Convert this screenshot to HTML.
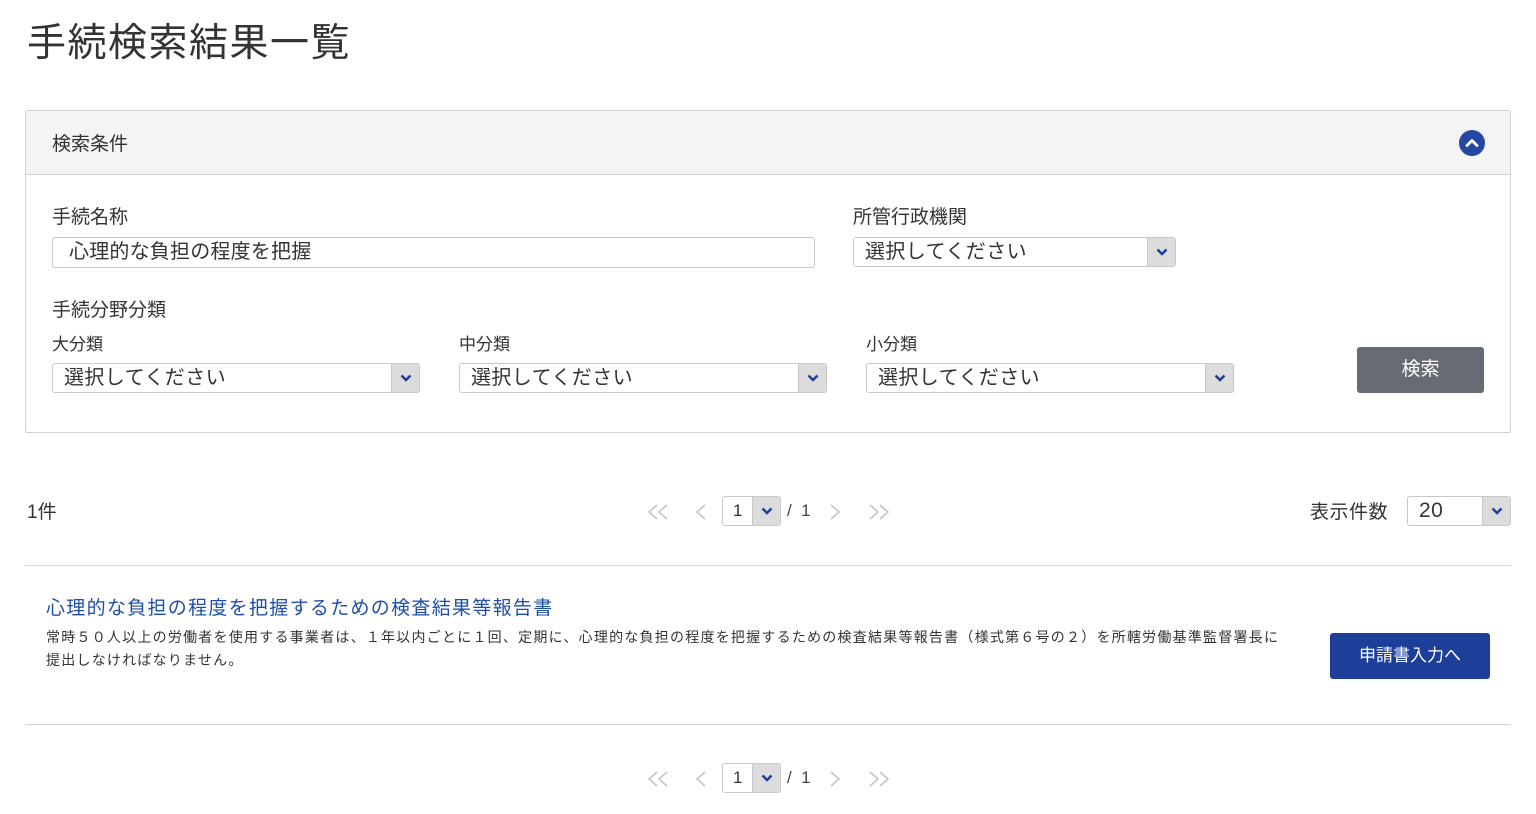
<!DOCTYPE html><html><head><meta charset="utf-8"><style>
*{box-sizing:border-box;margin:0;padding:0}
body{width:1536px;height:814px;background:#fff;font-family:"Liberation Sans","Noto Sans CJK JP",sans-serif;color:#333;position:relative;overflow:hidden}
.a{position:absolute;white-space:nowrap}
.sel{position:absolute;border:1px solid #c8c8c8;border-radius:3px;background:#fff;font-size:20px;color:#333;padding-left:11px;overflow:hidden;letter-spacing:0.4px}
.sel .ar{position:absolute;right:0;top:0;bottom:0;width:28px;background:#dcdcdc;border-left:1px solid #c8c8c8}
.sel .ar svg{position:absolute;left:8px;top:50%;margin-top:-4px}
.pg{position:absolute;width:260px;height:32px;color:#bbb;font-size:20px}
</style></head><body>
<div class="a" style="left:27px;top:12px;font-size:39px;color:#333;letter-spacing:1.5px">手続検索結果一覧</div>
<div class="a" style="left:25px;top:110px;width:1486px;height:323px;border:1px solid #cfd3da;border-radius:2px"></div>
<div class="a" style="left:26px;top:111px;width:1484px;height:64px;background:#f3f4f6;border-bottom:1px solid #cfd3da"></div>
<div class="a" style="left:52px;top:129px;font-size:19px">検索条件</div>
<svg class="a" style="left:1459px;top:130px" width="26" height="26"><circle cx="13" cy="13" r="13" fill="#2448a0"/><path d="M8 15.5 L13 10.5 L18 15.5" stroke="#fff" stroke-width="2.8" fill="none" stroke-linecap="round" stroke-linejoin="round"/></svg>
<div class="a" style="left:52px;top:202px;font-size:19px">手続名称</div>
<div class="sel" style="left:52px;top:237px;width:763px;height:31px;line-height:29px;padding-left:16px;letter-spacing:0.2px">心理的な負担の程度を把握</div>
<div class="a" style="left:853px;top:202px;font-size:19px">所管行政機関</div>
<div class="sel" style="left:853px;top:237px;width:323px;height:30px;line-height:28px">選択してください<div class="ar"><svg width="12" height="8"><path d="M1.5 1.5L6 6L10.5 1.5" stroke="#1e3f99" stroke-width="2.5" fill="none"/></svg></div></div>
<div class="a" style="left:52px;top:295px;font-size:19px">手続分野分類</div>
<div class="a" style="left:52px;top:330px;font-size:17px">大分類</div>
<div class="a" style="left:459px;top:330px;font-size:17px">中分類</div>
<div class="a" style="left:866px;top:330px;font-size:17px">小分類</div>
<div class="sel" style="left:52px;top:363px;width:368px;height:30px;line-height:28px">選択してください<div class="ar"><svg width="12" height="8"><path d="M1.5 1.5L6 6L10.5 1.5" stroke="#1e3f99" stroke-width="2.5" fill="none"/></svg></div></div>
<div class="sel" style="left:459px;top:363px;width:368px;height:30px;line-height:28px">選択してください<div class="ar"><svg width="12" height="8"><path d="M1.5 1.5L6 6L10.5 1.5" stroke="#1e3f99" stroke-width="2.5" fill="none"/></svg></div></div>
<div class="sel" style="left:866px;top:363px;width:368px;height:30px;line-height:28px">選択してください<div class="ar"><svg width="12" height="8"><path d="M1.5 1.5L6 6L10.5 1.5" stroke="#1e3f99" stroke-width="2.5" fill="none"/></svg></div></div>
<div class="a" style="left:1357px;top:347px;width:127px;height:46px;background:#676b73;border-radius:3px;color:#fff;font-size:19px;text-align:center;line-height:46px">検索</div>

<div class="a" style="left:27px;top:497px;font-size:19px">1件</div>
<div class="a" style="left:1310px;top:497px;font-size:19px;letter-spacing:0.5px">表示件数</div>
<div class="sel" style="left:1407px;top:496px;width:104px;height:30px;line-height:28px;font-size:21px">20<div class="ar"><svg width="12" height="8"><path d="M1.5 1.5L6 6L10.5 1.5" stroke="#1e3f99" stroke-width="2.5" fill="none"/></svg></div></div>

<div class="pg" style="left:645px;top:496px">
<svg class="a" style="left:0;top:8px" width="26" height="16"><path d="M12 1L4 8L12 15M22 1L14 8L22 15" stroke="#c4c4c4" stroke-width="1.6" fill="none"/></svg>
<svg class="a" style="left:49px;top:8px" width="14" height="16"><path d="M11 1L3 8L11 15" stroke="#c4c4c4" stroke-width="1.6" fill="none"/></svg>
<div class="sel" style="left:77px;top:0;width:59px;height:30px;line-height:28px;font-size:17px;padding-left:10px">1<div class="ar"><svg width="12" height="8"><path d="M1.5 1.5L6 6L10.5 1.5" stroke="#1e3f99" stroke-width="2.5" fill="none"/></svg></div></div>
<div class="a" style="left:142px;top:5px;font-size:17px;color:#444">/&nbsp;&nbsp;1</div>
<svg class="a" style="left:183px;top:8px" width="14" height="16"><path d="M3 1L11 8L3 15" stroke="#c4c4c4" stroke-width="1.6" fill="none"/></svg>
<svg class="a" style="left:221px;top:8px" width="26" height="16"><path d="M4 1L12 8L4 15M14 1L22 8L14 15" stroke="#c4c4c4" stroke-width="1.6" fill="none"/></svg>
</div>

<div class="a" style="left:25px;top:565px;width:1486px;height:1px;background:#d5d5d5"></div>
<div class="a" style="left:46px;top:593px;font-size:19px;color:#1e4fa8;letter-spacing:1.3px">心理的な負担の程度を把握するための検査結果等報告書</div>
<div class="a" style="left:46px;top:626px;font-size:14px;line-height:23px;color:#333;width:1270px;letter-spacing:1.23px">常時５０人以上の労働者を使用する事業者は、１年以内ごとに１回、定期に、心理的な負担の程度を把握するための検査結果等報告書（様式第６号の２）を所轄労働基準監督署長に<br>提出しなければなりません。</div>
<div class="a" style="left:1330px;top:633px;width:160px;height:46px;background:#1e3f99;border-radius:3px;color:#fff;font-size:17px;text-align:center;line-height:46px">申請書入力へ</div>
<div class="a" style="left:25px;top:724px;width:1486px;height:1px;background:#d5d5d5"></div>

<div class="pg" style="left:645px;top:763px">
<svg class="a" style="left:0;top:8px" width="26" height="16"><path d="M12 1L4 8L12 15M22 1L14 8L22 15" stroke="#c4c4c4" stroke-width="1.6" fill="none"/></svg>
<svg class="a" style="left:49px;top:8px" width="14" height="16"><path d="M11 1L3 8L11 15" stroke="#c4c4c4" stroke-width="1.6" fill="none"/></svg>
<div class="sel" style="left:77px;top:0;width:59px;height:30px;line-height:28px;font-size:17px;padding-left:10px">1<div class="ar"><svg width="12" height="8"><path d="M1.5 1.5L6 6L10.5 1.5" stroke="#1e3f99" stroke-width="2.5" fill="none"/></svg></div></div>
<div class="a" style="left:142px;top:5px;font-size:17px;color:#444">/&nbsp;&nbsp;1</div>
<svg class="a" style="left:183px;top:8px" width="14" height="16"><path d="M3 1L11 8L3 15" stroke="#c4c4c4" stroke-width="1.6" fill="none"/></svg>
<svg class="a" style="left:221px;top:8px" width="26" height="16"><path d="M4 1L12 8L4 15M14 1L22 8L14 15" stroke="#c4c4c4" stroke-width="1.6" fill="none"/></svg>
</div>
</body></html>
